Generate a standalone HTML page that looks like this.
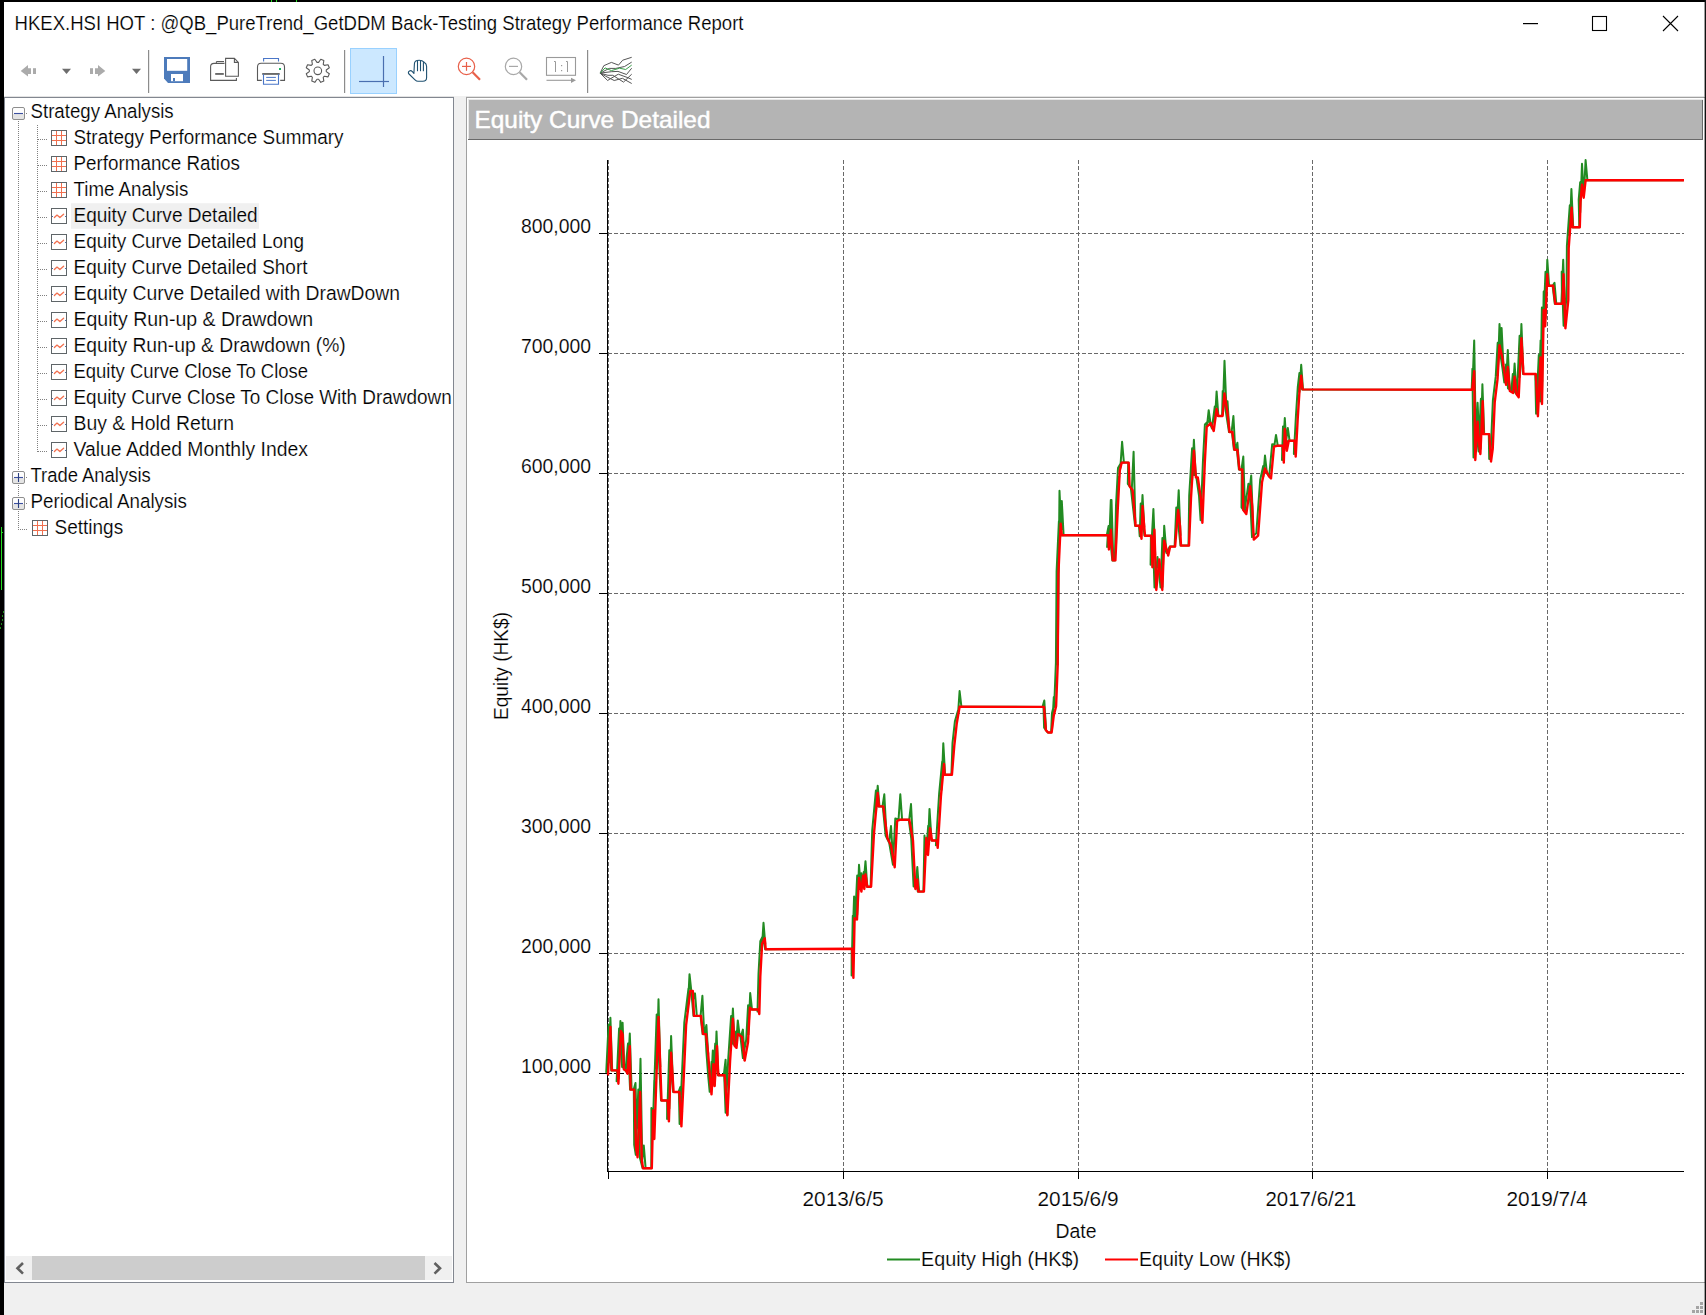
<!DOCTYPE html>
<html><head><meta charset="utf-8">
<style>
html,body{margin:0;padding:0;width:1706px;height:1315px;overflow:hidden;background:#fff;}
svg{position:absolute;left:0;top:0;}
text{font-family:"Liberation Sans", sans-serif;}
</style></head>
<body>
<svg width="1706" height="1315" viewBox="0 0 1706 1315">
<rect x="0" y="0" width="1706" height="1315" fill="#fff"/>
<!-- toolbar bottom line -->
<rect x="4" y="96" width="1700" height="1" fill="#e3e3e3"/>
<!-- status bar -->
<rect x="4" y="1283" width="1700" height="32" fill="#f0f0f0"/>
<!-- splitter -->
<rect x="454" y="96" width="12" height="1187" fill="#f0f0f0"/>
<!-- left panel -->
<rect x="4.5" y="97.5" width="449" height="1185" fill="#fff" stroke="#828790" stroke-width="1"/>
<!-- scrollbar -->
<rect x="6" y="1256" width="446" height="24" fill="#f0f0f0"/>
<rect x="32" y="1256" width="393" height="24" fill="#cdcdcd"/>
<path d="M23,1263 L17.5,1268.3 L23,1273.6" fill="none" stroke="#606060" stroke-width="2.6"/>
<path d="M434.5,1263 L440,1268.3 L434.5,1273.6" fill="none" stroke="#606060" stroke-width="2.6"/>
<!-- chart panel -->
<rect x="466.5" y="97.5" width="1240" height="1185" fill="#fff" stroke="#a0a0a0" stroke-width="1"/>
<rect x="468" y="99" width="1235" height="1" fill="#e8e8e8"/><rect x="468" y="99" width="1" height="41" fill="#e8e8e8"/><rect x="469" y="100" width="1234" height="40" fill="#b4b4b4"/>
<rect x="468" y="139" width="1235" height="1" fill="#696969"/>
<rect x="1702" y="100" width="1" height="40" fill="#696969"/>
<line x1="37.5" y1="125" x2="37.5" y2="452" stroke="#808080" stroke-width="1" stroke-dasharray="1,1"/><line x1="18.5" y1="121" x2="18.5" y2="530" stroke="#808080" stroke-width="1" stroke-dasharray="1,1"/><rect x="12.5" y="107.5" width="12" height="6.5" fill="#fdfdfd"/><rect x="12.5" y="114.0" width="12" height="5.5" fill="#e4e4e4"/><rect x="12.5" y="107.5" width="12" height="12" rx="1.5" fill="none" stroke="#8e8e8e" stroke-width="1"/><line x1="14" y1="113.5" x2="23" y2="113.5" stroke="#3c50a0" stroke-width="1.1"/><rect x="26" y="113" width="1" height="1" fill="#808080"/><rect x="51.5" y="130.5" width="15" height="15" fill="#fff" stroke="#5f6568" stroke-width="1"/><line x1="52" y1="135.5" x2="66" y2="135.5" stroke="#f07050" stroke-width="1"/><line x1="56.5" y1="131.0" x2="56.5" y2="145.0" stroke="#f07050" stroke-width="1"/><line x1="52" y1="140.5" x2="66" y2="140.5" stroke="#f07050" stroke-width="1"/><line x1="61.5" y1="131.0" x2="61.5" y2="145.0" stroke="#f07050" stroke-width="1"/><line x1="38" y1="139.5" x2="47" y2="139.5" stroke="#808080" stroke-width="1" stroke-dasharray="1,1"/><rect x="51.5" y="156.5" width="15" height="15" fill="#fff" stroke="#5f6568" stroke-width="1"/><line x1="52" y1="161.5" x2="66" y2="161.5" stroke="#f07050" stroke-width="1"/><line x1="56.5" y1="157.0" x2="56.5" y2="171.0" stroke="#f07050" stroke-width="1"/><line x1="52" y1="166.5" x2="66" y2="166.5" stroke="#f07050" stroke-width="1"/><line x1="61.5" y1="157.0" x2="61.5" y2="171.0" stroke="#f07050" stroke-width="1"/><line x1="38" y1="165.5" x2="47" y2="165.5" stroke="#808080" stroke-width="1" stroke-dasharray="1,1"/><rect x="51.5" y="182.5" width="15" height="15" fill="#fff" stroke="#5f6568" stroke-width="1"/><line x1="52" y1="187.5" x2="66" y2="187.5" stroke="#f07050" stroke-width="1"/><line x1="56.5" y1="183.0" x2="56.5" y2="197.0" stroke="#f07050" stroke-width="1"/><line x1="52" y1="192.5" x2="66" y2="192.5" stroke="#f07050" stroke-width="1"/><line x1="61.5" y1="183.0" x2="61.5" y2="197.0" stroke="#f07050" stroke-width="1"/><line x1="38" y1="191.5" x2="47" y2="191.5" stroke="#808080" stroke-width="1" stroke-dasharray="1,1"/><rect x="71" y="203.2" width="188" height="25.6" fill="#f0f0f0"/><rect x="51.5" y="208.5" width="15" height="15" fill="#fff" stroke="#5f6568" stroke-width="1"/><polyline points="54.4,217.5 57,215.1 59.9,217.6 63.6,214.2" fill="none" stroke="#f07050" stroke-width="1.3" stroke-linejoin="round" stroke-linecap="round"/><rect x="52" y="216.0" width="1" height="1" fill="#4a6aa8"/><rect x="65" y="216.0" width="1" height="1" fill="#4a6aa8"/><line x1="38" y1="217.5" x2="47" y2="217.5" stroke="#808080" stroke-width="1" stroke-dasharray="1,1"/><rect x="51.5" y="234.5" width="15" height="15" fill="#fff" stroke="#5f6568" stroke-width="1"/><polyline points="54.4,243.5 57,241.1 59.9,243.6 63.6,240.2" fill="none" stroke="#f07050" stroke-width="1.3" stroke-linejoin="round" stroke-linecap="round"/><rect x="52" y="242.0" width="1" height="1" fill="#4a6aa8"/><rect x="65" y="242.0" width="1" height="1" fill="#4a6aa8"/><line x1="38" y1="243.5" x2="47" y2="243.5" stroke="#808080" stroke-width="1" stroke-dasharray="1,1"/><rect x="51.5" y="260.5" width="15" height="15" fill="#fff" stroke="#5f6568" stroke-width="1"/><polyline points="54.4,269.5 57,267.1 59.9,269.6 63.6,266.2" fill="none" stroke="#f07050" stroke-width="1.3" stroke-linejoin="round" stroke-linecap="round"/><rect x="52" y="268.0" width="1" height="1" fill="#4a6aa8"/><rect x="65" y="268.0" width="1" height="1" fill="#4a6aa8"/><line x1="38" y1="269.5" x2="47" y2="269.5" stroke="#808080" stroke-width="1" stroke-dasharray="1,1"/><rect x="51.5" y="286.5" width="15" height="15" fill="#fff" stroke="#5f6568" stroke-width="1"/><polyline points="54.4,295.5 57,293.1 59.9,295.6 63.6,292.2" fill="none" stroke="#f07050" stroke-width="1.3" stroke-linejoin="round" stroke-linecap="round"/><rect x="52" y="294.0" width="1" height="1" fill="#4a6aa8"/><rect x="65" y="294.0" width="1" height="1" fill="#4a6aa8"/><line x1="38" y1="295.5" x2="47" y2="295.5" stroke="#808080" stroke-width="1" stroke-dasharray="1,1"/><rect x="51.5" y="312.5" width="15" height="15" fill="#fff" stroke="#5f6568" stroke-width="1"/><polyline points="54.4,321.5 57,319.1 59.9,321.6 63.6,318.2" fill="none" stroke="#f07050" stroke-width="1.3" stroke-linejoin="round" stroke-linecap="round"/><rect x="52" y="320.0" width="1" height="1" fill="#4a6aa8"/><rect x="65" y="320.0" width="1" height="1" fill="#4a6aa8"/><line x1="38" y1="321.5" x2="47" y2="321.5" stroke="#808080" stroke-width="1" stroke-dasharray="1,1"/><rect x="51.5" y="338.5" width="15" height="15" fill="#fff" stroke="#5f6568" stroke-width="1"/><polyline points="54.4,347.5 57,345.1 59.9,347.6 63.6,344.2" fill="none" stroke="#f07050" stroke-width="1.3" stroke-linejoin="round" stroke-linecap="round"/><rect x="52" y="346.0" width="1" height="1" fill="#4a6aa8"/><rect x="65" y="346.0" width="1" height="1" fill="#4a6aa8"/><line x1="38" y1="347.5" x2="47" y2="347.5" stroke="#808080" stroke-width="1" stroke-dasharray="1,1"/><rect x="51.5" y="364.5" width="15" height="15" fill="#fff" stroke="#5f6568" stroke-width="1"/><polyline points="54.4,373.5 57,371.1 59.9,373.6 63.6,370.2" fill="none" stroke="#f07050" stroke-width="1.3" stroke-linejoin="round" stroke-linecap="round"/><rect x="52" y="372.0" width="1" height="1" fill="#4a6aa8"/><rect x="65" y="372.0" width="1" height="1" fill="#4a6aa8"/><line x1="38" y1="373.5" x2="47" y2="373.5" stroke="#808080" stroke-width="1" stroke-dasharray="1,1"/><rect x="51.5" y="390.5" width="15" height="15" fill="#fff" stroke="#5f6568" stroke-width="1"/><polyline points="54.4,399.5 57,397.1 59.9,399.6 63.6,396.2" fill="none" stroke="#f07050" stroke-width="1.3" stroke-linejoin="round" stroke-linecap="round"/><rect x="52" y="398.0" width="1" height="1" fill="#4a6aa8"/><rect x="65" y="398.0" width="1" height="1" fill="#4a6aa8"/><line x1="38" y1="399.5" x2="47" y2="399.5" stroke="#808080" stroke-width="1" stroke-dasharray="1,1"/><rect x="51.5" y="416.5" width="15" height="15" fill="#fff" stroke="#5f6568" stroke-width="1"/><polyline points="54.4,425.5 57,423.1 59.9,425.6 63.6,422.2" fill="none" stroke="#f07050" stroke-width="1.3" stroke-linejoin="round" stroke-linecap="round"/><rect x="52" y="424.0" width="1" height="1" fill="#4a6aa8"/><rect x="65" y="424.0" width="1" height="1" fill="#4a6aa8"/><line x1="38" y1="425.5" x2="47" y2="425.5" stroke="#808080" stroke-width="1" stroke-dasharray="1,1"/><rect x="51.5" y="442.5" width="15" height="15" fill="#fff" stroke="#5f6568" stroke-width="1"/><polyline points="54.4,451.5 57,449.1 59.9,451.6 63.6,448.2" fill="none" stroke="#f07050" stroke-width="1.3" stroke-linejoin="round" stroke-linecap="round"/><rect x="52" y="450.0" width="1" height="1" fill="#4a6aa8"/><rect x="65" y="450.0" width="1" height="1" fill="#4a6aa8"/><line x1="38" y1="451.5" x2="47" y2="451.5" stroke="#808080" stroke-width="1" stroke-dasharray="1,1"/><rect x="12.5" y="471.5" width="12" height="6.5" fill="#fdfdfd"/><rect x="12.5" y="478.0" width="12" height="5.5" fill="#e4e4e4"/><rect x="12.5" y="471.5" width="12" height="12" rx="1.5" fill="none" stroke="#8e8e8e" stroke-width="1"/><line x1="14" y1="477.5" x2="23" y2="477.5" stroke="#3c50a0" stroke-width="1.1"/><line x1="18.5" y1="473.0" x2="18.5" y2="482.0" stroke="#2c4080" stroke-width="1.1"/><rect x="26" y="477" width="1" height="1" fill="#808080"/><rect x="12.5" y="497.5" width="12" height="6.5" fill="#fdfdfd"/><rect x="12.5" y="504.0" width="12" height="5.5" fill="#e4e4e4"/><rect x="12.5" y="497.5" width="12" height="12" rx="1.5" fill="none" stroke="#8e8e8e" stroke-width="1"/><line x1="14" y1="503.5" x2="23" y2="503.5" stroke="#3c50a0" stroke-width="1.1"/><line x1="18.5" y1="499.0" x2="18.5" y2="508.0" stroke="#2c4080" stroke-width="1.1"/><rect x="26" y="503" width="1" height="1" fill="#808080"/><rect x="32.5" y="520.5" width="15" height="15" fill="#fff" stroke="#5f6568" stroke-width="1"/><line x1="33" y1="525.5" x2="47" y2="525.5" stroke="#f07050" stroke-width="1"/><line x1="37.5" y1="521.0" x2="37.5" y2="535.0" stroke="#f07050" stroke-width="1"/><line x1="33" y1="530.5" x2="47" y2="530.5" stroke="#f07050" stroke-width="1"/><line x1="42.5" y1="521.0" x2="42.5" y2="535.0" stroke="#f07050" stroke-width="1"/><line x1="18" y1="529.5" x2="27" y2="529.5" stroke="#808080" stroke-width="1" stroke-dasharray="1,1"/>
<line x1="608" y1="233.5" x2="1684" y2="233.5" stroke="#696969" stroke-width="1" stroke-dasharray="4,2"/><line x1="608" y1="353.5" x2="1684" y2="353.5" stroke="#696969" stroke-width="1" stroke-dasharray="4,2"/><line x1="608" y1="473.5" x2="1684" y2="473.5" stroke="#696969" stroke-width="1" stroke-dasharray="4,2"/><line x1="608" y1="593.5" x2="1684" y2="593.5" stroke="#696969" stroke-width="1" stroke-dasharray="4,2"/><line x1="608" y1="713.5" x2="1684" y2="713.5" stroke="#696969" stroke-width="1" stroke-dasharray="4,2"/><line x1="608" y1="833.5" x2="1684" y2="833.5" stroke="#696969" stroke-width="1" stroke-dasharray="4,2"/><line x1="608" y1="953.5" x2="1684" y2="953.5" stroke="#696969" stroke-width="1" stroke-dasharray="4,2"/><line x1="608.5" y1="160" x2="608.5" y2="1171" stroke="#696969" stroke-width="1" stroke-dasharray="4,2"/><line x1="843.5" y1="160" x2="843.5" y2="1171" stroke="#696969" stroke-width="1" stroke-dasharray="4,2"/><line x1="1078.5" y1="160" x2="1078.5" y2="1171" stroke="#696969" stroke-width="1" stroke-dasharray="4,2"/><line x1="1312.5" y1="160" x2="1312.5" y2="1171" stroke="#696969" stroke-width="1" stroke-dasharray="4,2"/><line x1="1547.5" y1="160" x2="1547.5" y2="1171" stroke="#696969" stroke-width="1" stroke-dasharray="4,2"/><line x1="608" y1="1073.5" x2="1684" y2="1073.5" stroke="#000" stroke-width="1" stroke-dasharray="4,2"/><line x1="607.5" y1="160" x2="607.5" y2="1171.5" stroke="#000" stroke-width="1"/><line x1="607" y1="1171.5" x2="1684" y2="1171.5" stroke="#000" stroke-width="1"/><line x1="599" y1="233.5" x2="608" y2="233.5" stroke="#000" stroke-width="1"/><line x1="599" y1="353.5" x2="608" y2="353.5" stroke="#000" stroke-width="1"/><line x1="599" y1="473.5" x2="608" y2="473.5" stroke="#000" stroke-width="1"/><line x1="599" y1="593.5" x2="608" y2="593.5" stroke="#000" stroke-width="1"/><line x1="599" y1="713.5" x2="608" y2="713.5" stroke="#000" stroke-width="1"/><line x1="599" y1="833.5" x2="608" y2="833.5" stroke="#000" stroke-width="1"/><line x1="599" y1="953.5" x2="608" y2="953.5" stroke="#000" stroke-width="1"/><line x1="599" y1="1073.5" x2="608" y2="1073.5" stroke="#000" stroke-width="1"/><line x1="608.5" y1="1171" x2="608.5" y2="1179" stroke="#000" stroke-width="1"/><line x1="843.5" y1="1171" x2="843.5" y2="1179" stroke="#000" stroke-width="1"/><line x1="1078.5" y1="1171" x2="1078.5" y2="1179" stroke="#000" stroke-width="1"/><line x1="1312.5" y1="1171" x2="1312.5" y2="1179" stroke="#000" stroke-width="1"/><line x1="1547.5" y1="1171" x2="1547.5" y2="1179" stroke="#000" stroke-width="1"/><path d="M606.2,1072.9 L608.6,1024.4 L611.2,1070.4 L617.1,1070.4 L616.6,1081.2 L619.1,1028.5 L620.8,1031.9 L622.1,1067.0 L624.1,1067.9 L625.8,1071.2 L626.6,1057.8 L628.0,1043.6 L630.1,1089.6 L633.8,1089.6 L634.2,1144.8 L635.8,1154.8 L638.3,1089.5 L640.0,1158.2 L642.6,1168.2 L651.3,1168.2 L651.4,1108.0 L652.5,1136.5 L656.7,1014.4 L661.0,1100.5 L667.2,1100.5 L667.1,1118.9 L669.3,1050.3 L673.1,1092.0 L678.9,1092.0 L679.6,1123.9 L681.8,1077.9 L684.3,1022.7 L688.5,988.4 L691.0,988.4 L693.5,1015.9 L700.5,1015.9 L702.6,1034.1 L705.5,1034.1 L706.4,1051.7 L708.3,1077.2 L709.7,1091.8 L711.6,1061.7 L712.8,1083.6 L715.2,1043.5 L717.8,1075.2 L724.2,1075.2 L725.6,1112.8 L728.3,1058.1 L731.1,1016.1 L732.9,1043.5 L734.7,1045.3 L736.0,1031.6 L740.2,1034.4 L742.9,1058.1 L746.2,1039.8 L748.1,1005.2 L751.5,1009.5 L757.9,1009.5 L757.5,1011.5 L758.5,974.1 L760.3,941.3 L763.0,935.8 L765.2,949.3 L851.7,948.7 L851.6,975.4 L852.8,915.8 L855.2,917.0 L857.2,875.5 L859.6,889.1 L861.3,873.2 L862.5,886.5 L863.7,872.0 L866.7,886.7 L870.6,886.7 L872.2,830.7 L875.9,790.5 L878.4,806.4 L882.8,806.4 L885.6,835.5 L889.2,842.9 L892.9,864.7 L895.3,818.5 L899.1,819.8 L908.8,819.8 L911.2,838.0 L913.6,886.5 L915.5,876.9 L917.8,891.6 L923.4,891.6 L924.5,835.5 L926.2,852.5 L928.2,825.8 L931.5,840.5 L936.3,840.5 L935.9,845.3 L939.1,794.2 L942.2,761.5 L944.1,774.8 L951.4,774.8 L952.5,743.2 L954.9,721.3 L959.1,706.7 L1043.5,706.9 L1044.1,727.7 L1047.6,732.5 L1051.1,732.5 L1052.0,712.9 L1054.3,703.7 L1055.9,662.7 L1056.6,571.5 L1058.9,521.3 L1061.3,535.2 L1107.8,535.3 L1107.1,547.0 L1109.1,527.3 L1112.3,560.4 L1114.9,560.4 L1116.0,505.5 L1118.0,468.0 L1121.2,462.6 L1128.2,462.6 L1127.8,483.8 L1130.8,487.7 L1135.1,525.8 L1139.0,525.8 L1139.7,536.2 L1140.7,503.5 L1144.5,535.7 L1150.9,535.7 L1150.6,564.8 L1152.6,527.3 L1154.5,587.5 L1157.5,556.9 L1160.5,587.5 L1162.4,538.1 L1166.4,553.0 L1169.7,546.6 L1174.6,546.6 L1176.3,507.5 L1178.2,523.3 L1180.5,545.6 L1188.5,545.6 L1189.2,495.5 L1192.1,448.2 L1194.1,474.9 L1196.0,474.9 L1199.0,495.5 L1200.6,520.3 L1203.0,460.1 L1204.9,424.5 L1208.9,420.5 L1211.9,428.5 L1214.8,406.5 L1217.7,416.0 L1222.1,416.0 L1222.7,390.9 L1225.7,410.5 L1229.0,432.0 L1231.9,432.0 L1233.9,449.7 L1236.9,449.7 L1238.9,469.5 L1241.8,469.5 L1241.5,507.5 L1244.5,511.5 L1248.4,483.8 L1250.4,503.5 L1252.0,537.1 L1256.3,533.2 L1260.2,479.8 L1263.2,466.0 L1267.2,473.9 L1269.2,475.9 L1272.2,444.2 L1276.4,445.8 L1282.3,445.8 L1282.0,460.1 L1283.0,426.5 L1285.0,448.2 L1288.3,440.8 L1294.2,440.8 L1293.9,454.1 L1295.9,416.5 L1297.8,386.9 L1299.4,373.1 L1302.1,389.4 L1471.7,389.7 L1472.4,368.7 L1473.5,457.5 L1475.8,419.3 L1477.2,439.8 L1478.6,451.5 L1480.9,398.8 L1483.0,434.1 L1488.8,434.1 L1489.2,459.0 L1490.9,446.7 L1492.9,400.2 L1495.7,376.9 L1497.7,342.7 L1500.5,355.0 L1502.5,368.7 L1504.3,382.4 L1506.0,364.5 L1508.0,388.5 L1511.4,390.5 L1512.8,374.1 L1514.8,391.9 L1516.9,394.7 L1519.6,335.8 L1523.0,374.0 L1535.3,374.0 L1536.1,413.8 L1538.8,355.0 L1540.2,401.5 L1541.9,307.5 L1543.4,323.7 L1545.5,271.7 L1547.5,285.7 L1552.6,285.7 L1554.8,303.8 L1562.0,303.8 L1561.7,271.7 L1563.6,325.8 L1566.5,297.7 L1566.9,245.7 L1569.8,205.3 L1572.1,227.3 L1579.3,227.3 L1578.7,199.5 L1580.2,182.2 L1581.9,195.2 L1585.1,180.3 L1683.5,180.3 M608.6,1063.3 L610.4,1017.7 L612.2,1070.4 M618.6,1079.5 L620.4,1021.0 L622.2,1033.6 M620.8,1033.1 L622.6,1022.7 L624.4,1069.7 M628.0,1067.0 L629.8,1033.6 L631.6,1089.6 M633.7,1089.6 L635.5,1082.9 L637.3,1155.4 M638.7,1128.6 L640.5,1058.7 L642.3,1163.6 M642.0,1161.9 L643.8,1145.6 L645.6,1168.2 M652.5,1139.3 L654.3,1080.4 L656.1,1086.7 M656.7,1069.2 L658.5,999.3 L660.3,1067.1 M669.3,1108.9 L671.1,1036.1 L672.9,1081.0 M678.5,1092.0 L680.3,1087.0 L682.1,1111.8 M687.7,1012.1 L689.5,974.2 L691.3,990.9 M693.2,999.2 L695.0,993.4 L696.8,1015.9 M700.6,1015.9 L702.4,995.8 L704.2,1034.1 M704.6,1034.1 L706.4,1025.0 L708.2,1054.2 M711.0,1089.1 L712.8,1050.5 L714.6,1086.1 M714.7,1084.4 L716.5,1031.4 L718.3,1075.2 M723.8,1075.2 L725.6,1059.7 L727.4,1115.3 M731.1,1045.6 L732.9,1008.6 L734.7,1046.0 M736.0,1047.3 L737.8,1020.4 L739.6,1035.3 M741.1,1036.3 L742.9,1029.6 L744.7,1060.6 M748.4,1035.0 L750.2,993.0 L752.0,1009.5 M761.7,951.1 L763.5,922.8 L765.3,944.4 M852.3,951.1 L854.1,896.4 L855.9,918.9 M857.2,915.3 L859.0,864.8 L860.8,888.2 M863.7,882.4 L865.5,861.2 L867.3,886.7 M875.9,812.6 L877.7,785.8 L879.5,806.4 M882.5,806.4 L884.3,794.3 L886.1,828.0 M889.2,841.7 L891.0,826.0 L892.8,856.0 M898.5,820.3 L900.3,794.3 L902.1,819.8 M909.2,819.8 L911.0,804.0 L912.8,839.4 M915.5,888.5 L917.3,867.0 L919.1,891.6 M927.7,852.0 L929.5,808.9 L931.3,836.2 M941.5,790.4 L943.3,743.2 L945.1,774.8 M957.8,717.3 L959.6,691.0 L961.4,706.7 M1042.5,706.9 L1044.3,700.5 L1046.1,730.4 M1052.0,729.4 L1053.8,697.0 L1055.6,708.2 M1057.7,665.2 L1059.5,490.8 L1061.3,530.0 M1060.0,539.1 L1061.8,501.0 L1063.6,535.2 M1106.8,535.3 L1108.6,526.0 L1110.4,534.7 M1109.0,548.5 L1110.8,500.0 L1112.6,557.2 M1115.9,549.5 L1117.7,480.5 L1119.5,476.1 M1109.7,541.6 L1111.5,500.0 L1113.3,560.4 M1120.3,468.4 L1122.1,441.8 L1123.9,462.6 M1131.8,489.2 L1133.6,451.7 L1135.4,523.4 M1140.7,533.5 L1142.5,495.0 L1144.3,527.4 M1151.6,542.0 L1153.4,509.0 L1155.2,555.1 M1162.4,587.4 L1164.2,525.8 L1166.0,547.3 M1176.9,524.6 L1178.7,490.2 L1180.5,535.7 M1192.1,480.1 L1193.9,439.8 L1195.7,474.7 M1206.9,426.8 L1208.7,410.2 L1210.5,423.2 M1214.8,422.7 L1216.6,391.4 L1218.4,416.0 M1222.7,414.8 L1224.5,360.8 L1226.3,405.2 M1225.7,401.2 L1227.5,401.3 L1229.3,430.1 M1231.6,432.0 L1233.4,416.0 L1235.2,449.7 M1235.6,449.7 L1237.4,442.8 L1239.2,467.5 M1241.5,469.5 L1243.3,456.6 L1245.1,512.4 M1249.4,492.0 L1251.2,475.4 L1253.0,522.8 M1263.2,476.8 L1265.0,455.6 L1266.8,472.1 M1274.2,446.6 L1276.0,434.9 L1277.8,445.8 M1283.0,449.2 L1284.8,418.0 L1286.6,448.5 M1286.0,442.0 L1287.8,428.0 L1289.6,440.8 M1299.4,392.5 L1301.2,364.7 L1303.0,389.4 M1472.4,387.8 L1474.2,340.4 L1476.0,448.4 M1475.8,451.7 L1477.6,402.7 L1479.4,445.6 M1480.6,449.4 L1482.4,384.2 L1484.2,434.1 M1497.7,376.0 L1499.5,324.0 L1501.3,353.1 M1499.8,346.5 L1501.6,328.0 L1503.4,365.0 M1506.0,384.1 L1507.8,350.0 L1509.6,388.6 M1512.8,392.8 L1514.6,363.6 L1516.4,392.6 M1519.6,377.6 L1521.4,324.0 L1523.2,368.9 M1538.8,396.7 L1540.6,340.4 L1542.4,381.9 M1541.9,400.7 L1543.7,291.5 L1545.5,318.8 M1545.5,318.8 L1547.3,259.7 L1549.1,285.7 M1552.7,285.7 L1554.5,282.9 L1556.3,303.8 M1561.4,303.8 L1563.2,259.7 L1565.0,316.9 M1569.6,235.7 L1571.4,189.0 L1573.2,227.3 M1580.2,212.8 L1582.0,163.7 L1583.8,196.8 M1583.8,196.8 L1585.6,160.1 L1587.4,180.3" fill="none" stroke="#228b22" stroke-width="2.0" stroke-linejoin="round"/><polyline points="608.0,1075.4 610.4,1026.9 611.7,1070.4 617.6,1070.4 618.4,1083.7 620.9,1031.0 622.6,1034.4 623.9,1069.5 625.9,1070.4 627.6,1073.7 628.4,1060.3 629.8,1046.1 630.6,1089.6 634.3,1089.6 636.0,1147.3 637.6,1157.3 640.1,1092.0 641.8,1160.7 643.1,1168.2 651.8,1168.2 653.2,1110.5 654.3,1139.0 658.5,1016.9 661.5,1100.5 667.7,1100.5 668.9,1121.4 671.1,1052.8 673.6,1092.0 679.4,1092.0 681.4,1126.4 683.6,1080.4 686.1,1025.2 690.3,990.9 692.8,990.9 694.0,1015.9 701.0,1015.9 703.1,1034.1 706.0,1034.1 708.2,1054.2 710.1,1079.7 711.5,1094.3 713.4,1064.2 714.6,1086.1 717.0,1046.0 718.3,1075.2 724.7,1075.2 727.4,1115.3 730.1,1060.6 732.9,1018.6 734.7,1046.0 736.5,1047.8 737.8,1034.1 742.0,1036.9 744.7,1060.6 748.0,1042.3 749.9,1007.7 752.0,1009.5 758.4,1009.5 759.3,1014.0 760.3,976.6 762.1,943.8 764.8,938.3 765.7,949.3 852.2,948.7 853.4,977.9 854.6,918.3 857.0,919.5 859.0,878.0 861.4,891.6 863.1,875.7 864.3,889.0 865.5,874.5 867.2,886.7 871.1,886.7 874.0,833.2 877.7,793.0 878.9,806.4 883.3,806.4 887.4,838.0 891.0,845.4 894.7,867.2 897.1,821.0 899.6,819.8 909.3,819.8 913.0,840.5 915.4,889.0 917.3,879.4 918.3,891.6 923.9,891.6 926.3,838.0 928.0,855.0 930.0,828.3 932.0,840.5 936.8,840.5 937.7,847.8 940.9,796.7 944.0,764.0 944.6,774.8 951.9,774.8 954.3,745.7 956.7,723.8 959.6,706.7 1044.0,706.9 1045.9,730.2 1048.1,732.5 1051.6,732.5 1053.8,715.4 1056.1,706.2 1057.7,665.2 1058.4,574.0 1060.7,523.8 1061.8,535.2 1108.3,535.3 1108.9,549.5 1110.9,529.8 1112.8,560.4 1115.4,560.4 1117.8,508.0 1119.8,470.5 1121.7,462.6 1128.7,462.6 1129.6,486.3 1132.6,490.2 1135.6,525.8 1139.5,525.8 1141.5,538.7 1142.5,506.0 1145.0,535.7 1151.4,535.7 1152.4,567.3 1154.4,529.8 1156.3,590.0 1159.3,559.4 1162.3,590.0 1164.2,540.6 1168.2,555.5 1170.2,546.6 1175.1,546.6 1178.1,510.0 1180.0,525.8 1181.0,545.6 1189.0,545.6 1191.0,498.0 1193.9,450.7 1195.9,477.4 1197.8,477.4 1200.8,498.0 1202.4,522.8 1204.8,462.6 1206.7,427.0 1210.7,423.0 1213.7,431.0 1216.6,409.0 1218.2,416.0 1222.6,416.0 1224.5,393.4 1227.5,413.0 1229.5,432.0 1232.4,432.0 1234.4,449.7 1237.4,449.7 1239.4,469.5 1242.3,469.5 1243.3,510.0 1246.3,514.0 1250.2,486.3 1252.2,506.0 1253.8,539.6 1258.1,535.7 1262.0,482.3 1265.0,468.5 1269.0,476.4 1271.0,478.4 1274.0,446.7 1276.9,445.8 1282.8,445.8 1283.8,462.6 1284.8,429.0 1286.8,450.7 1288.8,440.8 1294.7,440.8 1295.7,456.6 1297.7,419.0 1299.6,389.4 1301.2,375.6 1302.6,389.4 1472.2,389.7 1474.2,371.2 1475.3,460.0 1477.6,421.8 1479.0,442.3 1480.4,454.0 1482.7,401.3 1483.5,434.1 1489.3,434.1 1491.0,461.5 1492.7,449.2 1494.7,402.7 1497.5,379.4 1499.5,345.2 1502.3,357.5 1504.3,371.2 1506.1,384.9 1507.8,367.0 1509.8,391.0 1513.2,393.0 1514.6,376.6 1516.6,394.4 1518.7,397.2 1521.4,338.3 1523.5,374.0 1535.8,374.0 1537.9,416.3 1540.6,357.5 1542.0,404.0 1543.7,310.0 1545.2,326.2 1547.3,274.2 1548.0,285.7 1553.1,285.7 1555.3,303.8 1562.5,303.8 1563.5,274.2 1565.4,328.3 1568.3,300.2 1568.7,248.2 1571.6,207.8 1572.6,227.3 1579.8,227.3 1580.5,202.0 1582.0,184.7 1583.7,197.7 1585.6,180.3 1684.0,180.3" fill="none" stroke="#ff0000" stroke-width="2.4" stroke-linejoin="round"/>
<path d="M20.7,70.9 L28,65.1 L28,68.2 L31,68.2 L31,74 L28,74 L28,76.6 Z" fill="#ababab"/><rect x="33" y="68.2" width="3" height="5.8" fill="#ababab"/><path d="M62,68.8 L71,68.8 L66.5,74 Z" fill="#6d6d6d"/><rect x="90" y="68.2" width="3" height="5.8" fill="#ababab"/><path d="M105.3,70.9 L98,65.1 L98,68.2 L95,68.2 L95,74 L98,74 L98,76.6 Z" fill="#ababab"/><path d="M132,68.8 L141,68.8 L136.5,74 Z" fill="#6d6d6d"/><rect x="148" y="50" width="1.2" height="43" fill="#8c8c8c"/><path d="M164,57 L190,57 L190,83 L168,83 L164,78.6 Z" fill="#4d7bbb"/><rect x="167" y="59" width="20.2" height="11.8" fill="#fff"/><rect x="171" y="74" width="12" height="7.2" fill="#fff"/><rect x="173" y="78" width="2" height="3.2" fill="#4d7bbb"/><path d="M224.5,63.4 L214,63.4 Q210.6,63.4 210.6,66.8 L210.6,80.4 L236.4,80.4 L236.4,78" fill="none" stroke="#5a5a5a" stroke-width="1.1"/><path d="M216.4,63.4 L216.4,61.5 L224,61.5" fill="none" stroke="#5a5a5a" stroke-width="1"/><rect x="215.2" y="73.1" width="8.6" height="1.7" fill="#5a5a5a"/><path d="M225.6,58.4 L234.4,58.4 L238.4,62.4 L238.4,76.3 L225.6,76.3 Z M234.4,58.6 L234.4,62.4 L238.2,62.4" fill="none" stroke="#5a5a5a" stroke-width="1.1" stroke-linejoin="miter"/><path d="M263.6,61.6 L263.6,58.5 L278.5,58.5 L278.5,61.6" fill="none" stroke="#4a76c8" stroke-width="1.1"/><path d="M261.8,80.4 L257.5,80.4 L257.5,67 Q257.5,63.3 261.2,63.3 L280.8,63.3 Q284.5,63.3 284.5,67 L284.5,80.4 L280.2,80.4" fill="none" stroke="#5a5a5a" stroke-width="1.1"/><rect x="262.2" y="73.1" width="17.5" height="1.7" fill="#5a5a5a"/><path d="M263.5,74.3 L263.5,84.2 L278.5,84.2 L278.5,74.3" fill="none" stroke="#4a76c8" stroke-width="1.1"/><line x1="266.2" y1="77.4" x2="275.9" y2="77.4" stroke="#4a76c8" stroke-width="1"/><line x1="266.2" y1="80.4" x2="275.9" y2="80.4" stroke="#4a76c8" stroke-width="1"/><rect x="279" y="68" width="2" height="2" fill="#19b060"/><polygon points="326.26,71.59 329.32,73.78 328.05,76.84 324.34,76.23 323.23,77.34 323.84,81.05 320.78,82.32 318.59,79.26 317.01,79.26 314.82,82.32 311.76,81.05 312.37,77.34 311.26,76.23 307.55,76.84 306.28,73.78 309.34,71.59 309.34,70.01 306.28,67.82 307.55,64.76 311.26,65.37 312.37,64.26 311.76,60.55 314.82,59.28 317.01,62.34 318.59,62.34 320.78,59.28 323.84,60.55 323.23,64.26 324.34,65.37 328.05,64.76 329.32,67.82 326.26,70.01" fill="none" stroke="#5a5a5a" stroke-width="1.1" stroke-linejoin="round"/><circle cx="317.8" cy="70.8" r="3.8" fill="none" stroke="#5a5a5a" stroke-width="1.1"/><rect x="344" y="50" width="1.2" height="43" fill="#8c8c8c"/><rect x="350.5" y="48.5" width="46" height="45" fill="#cce8ff" stroke="#99d1ff" stroke-width="1"/><line x1="383.5" y1="56" x2="383.5" y2="87" stroke="#4a6fb0" stroke-width="1.2"/><line x1="359" y1="81.5" x2="389" y2="81.5" stroke="#4a6fb0" stroke-width="1.2"/><path d="M413.9,73.5 L414.4,64 C414.4,61.5 416.5,60.2 419.2,60.2 C421.5,60.2 423.3,61.3 424.4,62.4 C425.8,63.2 426.6,64.5 426.6,66.5 L426.6,77.5 C426.6,79.8 425,81.3 422.8,81.3 L418,81.3 C416.8,81.3 415.8,80.6 415,79.8 L409,74 C408,73 408.2,71.6 409.5,70.9 C410.6,70.3 411.6,70.8 412.4,71.6 Z M417.5,61.3 L417.5,70.8 M420.5,60.6 L420.5,70.8 M423.4,62.2 L423.4,70.8" fill="none" stroke="#1e5070" stroke-width="1.1" stroke-linejoin="round" stroke-linecap="round"/><circle cx="466.5" cy="66.4" r="8.2" fill="none" stroke="#e8604a" stroke-width="1.2"/><line x1="472.6" y1="72.3" x2="480" y2="79.8" stroke="#e8604a" stroke-width="2.2"/><line x1="462" y1="66.4" x2="471" y2="66.4" stroke="#e8604a" stroke-width="1.2"/><line x1="466.5" y1="62" x2="466.5" y2="70.8" stroke="#e8604a" stroke-width="1.2"/><circle cx="513.5" cy="66.4" r="8.2" fill="none" stroke="#a8a8a8" stroke-width="1.2"/><line x1="519.6" y1="72.3" x2="527" y2="79.8" stroke="#a8a8a8" stroke-width="2.2"/><line x1="509" y1="66.4" x2="518" y2="66.4" stroke="#a8a8a8" stroke-width="1.2"/><rect x="546.5" y="57.5" width="29" height="17.8" fill="none" stroke="#9a9a9a" stroke-width="1.1"/><path d="M554,61.5 L555.5,61.5 L555.5,72 M566,61.5 L567.5,61.5 L567.5,72" fill="none" stroke="#9a9a9a" stroke-width="1"/><rect x="561" y="65" width="1.2" height="1.2" fill="#9a9a9a"/><rect x="561" y="70" width="1.2" height="1.2" fill="#9a9a9a"/><line x1="546.5" y1="80.3" x2="572" y2="80.3" stroke="#9a9a9a" stroke-width="1.1"/><path d="M571,77.7 L576,80.3 L571,82.9 Z" fill="#9a9a9a"/><rect x="587" y="50" width="1.2" height="43" fill="#8c8c8c"/><polyline points="600.1,73.1 603.8,65.7 611.4,62.4 618.5,65.1 622.7,60.2 631.7,57.3" fill="none" stroke="#555" stroke-width="1" stroke-linejoin="round"/><polyline points="600.1,73.1 602.9,71.7 609.2,68.4 615.8,68.4 624.6,66.5 631.7,62.1" fill="none" stroke="#555" stroke-width="1" stroke-linejoin="round"/><polyline points="600.1,73.1 611.4,71.7 618,71.4 626.5,74.5 631.7,68.2" fill="none" stroke="#555" stroke-width="1" stroke-linejoin="round"/><polyline points="600.1,73.1 607.9,75.3 612.8,75.3 623.5,82.1 631.7,74.2" fill="none" stroke="#555" stroke-width="1" stroke-linejoin="round"/><polyline points="600.1,73.1 607.6,80.5 610.6,78.6 618.3,74.2 627.9,77.7 631.7,79.4" fill="none" stroke="#555" stroke-width="1" stroke-linejoin="round"/><polyline points="600.1,73.1 605.4,76.1 614.2,80.5 622.4,78.3 631.7,83.5" fill="none" stroke="#555" stroke-width="1" stroke-linejoin="round"/><polyline points="600.1,73.1 605.1,67.9 611.4,70.6 619.6,68.2 625.7,69.5 631.7,65.1" fill="none" stroke="#3aa04a" stroke-width="1" stroke-linejoin="round"/>
<rect x="1523" y="23" width="15" height="1.2" fill="#000"/><rect x="1592.5" y="16.5" width="14" height="14" fill="none" stroke="#000" stroke-width="1.1"/><path d="M1663,16 L1678,31 M1678,16 L1663,31" stroke="#000" stroke-width="1.1"/>
<text x="14.5" y="30" font-size="19.8" text-anchor="start" fill="#000" stroke="#fff" stroke-width="0.18" textLength="729" lengthAdjust="spacingAndGlyphs" >HKEX.HSI HOT : @QB_PureTrend_GetDDM Back-Testing Strategy Performance Report</text><text x="30.5" y="117.5" font-size="19.5" text-anchor="start" fill="#000" stroke="#fff" stroke-width="0.18" textLength="143.2" lengthAdjust="spacingAndGlyphs" >Strategy Analysis</text><text x="73.5" y="143.5" font-size="19.5" text-anchor="start" fill="#000" stroke="#fff" stroke-width="0.18" textLength="269.9" lengthAdjust="spacingAndGlyphs" >Strategy Performance Summary</text><text x="73.5" y="169.5" font-size="19.5" text-anchor="start" fill="#000" stroke="#fff" stroke-width="0.18" textLength="166.3" lengthAdjust="spacingAndGlyphs" >Performance Ratios</text><text x="73.5" y="195.5" font-size="19.5" text-anchor="start" fill="#000" stroke="#fff" stroke-width="0.18" textLength="114.8" lengthAdjust="spacingAndGlyphs" >Time Analysis</text><text x="73.5" y="221.5" font-size="19.5" text-anchor="start" fill="#000" stroke="#f0f0f0" stroke-width="0.18" textLength="184.1" lengthAdjust="spacingAndGlyphs" >Equity Curve Detailed</text><text x="73.5" y="247.5" font-size="19.5" text-anchor="start" fill="#000" stroke="#fff" stroke-width="0.18" textLength="230.5" lengthAdjust="spacingAndGlyphs" >Equity Curve Detailed Long</text><text x="73.5" y="273.5" font-size="19.5" text-anchor="start" fill="#000" stroke="#fff" stroke-width="0.18" textLength="234.0" lengthAdjust="spacingAndGlyphs" >Equity Curve Detailed Short</text><text x="73.5" y="299.5" font-size="19.5" text-anchor="start" fill="#000" stroke="#fff" stroke-width="0.18" textLength="326.5" lengthAdjust="spacingAndGlyphs" >Equity Curve Detailed with DrawDown</text><text x="73.5" y="325.5" font-size="19.5" text-anchor="start" fill="#000" stroke="#fff" stroke-width="0.18" textLength="239.6" lengthAdjust="spacingAndGlyphs" >Equity Run-up &amp; Drawdown</text><text x="73.5" y="351.5" font-size="19.5" text-anchor="start" fill="#000" stroke="#fff" stroke-width="0.18" textLength="272.2" lengthAdjust="spacingAndGlyphs" >Equity Run-up &amp; Drawdown (%)</text><text x="73.5" y="377.5" font-size="19.5" text-anchor="start" fill="#000" stroke="#fff" stroke-width="0.18" textLength="234.5" lengthAdjust="spacingAndGlyphs" >Equity Curve Close To Close</text><text x="73.5" y="403.5" font-size="19.5" text-anchor="start" fill="#000" stroke="#fff" stroke-width="0.18" textLength="378.2" lengthAdjust="spacingAndGlyphs" >Equity Curve Close To Close With Drawdown</text><text x="73.5" y="429.5" font-size="19.5" text-anchor="start" fill="#000" stroke="#fff" stroke-width="0.18" textLength="160.6" lengthAdjust="spacingAndGlyphs" >Buy &amp; Hold Return</text><text x="73.5" y="455.5" font-size="19.5" text-anchor="start" fill="#000" stroke="#fff" stroke-width="0.18" textLength="234.4" lengthAdjust="spacingAndGlyphs" >Value Added Monthly Index</text><text x="30.5" y="481.5" font-size="19.5" text-anchor="start" fill="#000" stroke="#fff" stroke-width="0.18" textLength="120.2" lengthAdjust="spacingAndGlyphs" >Trade Analysis</text><text x="30.5" y="507.5" font-size="19.5" text-anchor="start" fill="#000" stroke="#fff" stroke-width="0.18" textLength="156.4" lengthAdjust="spacingAndGlyphs" >Periodical Analysis</text><text x="54.5" y="533.5" font-size="19.5" text-anchor="start" fill="#000" stroke="#fff" stroke-width="0.18" textLength="68.7" lengthAdjust="spacingAndGlyphs" >Settings</text><text x="474.5" y="128" font-size="24.0" text-anchor="start" fill="#fff" textLength="236" lengthAdjust="spacingAndGlyphs" stroke="#fff" stroke-width="0.45">Equity Curve Detailed</text><text x="591" y="233" font-size="19.5" text-anchor="end" fill="#000" stroke="#fff" stroke-width="0.18" textLength="70" lengthAdjust="spacingAndGlyphs" >800,000</text><text x="591" y="353" font-size="19.5" text-anchor="end" fill="#000" stroke="#fff" stroke-width="0.18" textLength="70" lengthAdjust="spacingAndGlyphs" >700,000</text><text x="591" y="473" font-size="19.5" text-anchor="end" fill="#000" stroke="#fff" stroke-width="0.18" textLength="70" lengthAdjust="spacingAndGlyphs" >600,000</text><text x="591" y="593" font-size="19.5" text-anchor="end" fill="#000" stroke="#fff" stroke-width="0.18" textLength="70" lengthAdjust="spacingAndGlyphs" >500,000</text><text x="591" y="713" font-size="19.5" text-anchor="end" fill="#000" stroke="#fff" stroke-width="0.18" textLength="70" lengthAdjust="spacingAndGlyphs" >400,000</text><text x="591" y="833" font-size="19.5" text-anchor="end" fill="#000" stroke="#fff" stroke-width="0.18" textLength="70" lengthAdjust="spacingAndGlyphs" >300,000</text><text x="591" y="953" font-size="19.5" text-anchor="end" fill="#000" stroke="#fff" stroke-width="0.18" textLength="70" lengthAdjust="spacingAndGlyphs" >200,000</text><text x="591" y="1073" font-size="19.5" text-anchor="end" fill="#000" stroke="#fff" stroke-width="0.18" textLength="70" lengthAdjust="spacingAndGlyphs" >100,000</text><text x="843" y="1206" font-size="19.5" text-anchor="middle" fill="#000" stroke="#fff" stroke-width="0.18" textLength="81" lengthAdjust="spacingAndGlyphs" >2013/6/5</text><text x="1078" y="1206" font-size="19.5" text-anchor="middle" fill="#000" stroke="#fff" stroke-width="0.18" textLength="81" lengthAdjust="spacingAndGlyphs" >2015/6/9</text><text x="1311" y="1206" font-size="19.5" text-anchor="middle" fill="#000" stroke="#fff" stroke-width="0.18" textLength="91" lengthAdjust="spacingAndGlyphs" >2017/6/21</text><text x="1547" y="1206" font-size="19.5" text-anchor="middle" fill="#000" stroke="#fff" stroke-width="0.18" textLength="81" lengthAdjust="spacingAndGlyphs" >2019/7/4</text><text x="1076" y="1238" font-size="19.5" text-anchor="middle" fill="#000" stroke="#fff" stroke-width="0.18" textLength="41" lengthAdjust="spacingAndGlyphs" >Date</text><text x="921" y="1266" font-size="19.5" text-anchor="start" fill="#000" stroke="#fff" stroke-width="0.18" textLength="158" lengthAdjust="spacingAndGlyphs" >Equity High (HK$)</text><rect x="887" y="1258.5" width="33" height="2" fill="#228b22"/><rect x="1105" y="1258.5" width="33" height="2" fill="#ff0000"/><text x="1139" y="1266" font-size="19.5" text-anchor="start" fill="#000" stroke="#fff" stroke-width="0.18" textLength="152" lengthAdjust="spacingAndGlyphs" >Equity Low (HK$)</text><text x="0" y="0" font-size="19.5" stroke="#fff" stroke-width="0.18" transform="translate(508,720) rotate(-90)" textLength="108" lengthAdjust="spacingAndGlyphs">Equity (HK$)</text>
<!-- resize grip -->
<rect x="1700" y="1302" width="3" height="3" fill="#a4a4a4"/><rect x="1696" y="1306" width="3" height="3" fill="#a4a4a4"/><rect x="1700" y="1306" width="3" height="3" fill="#a4a4a4"/><rect x="1692" y="1310" width="3" height="3" fill="#a4a4a4"/><rect x="1696" y="1310" width="3" height="3" fill="#a4a4a4"/><rect x="1700" y="1310" width="3" height="3" fill="#a4a4a4"/>
<!-- window borders -->
<rect x="0" y="0" width="1706" height="2" fill="#000"/>
<rect x="0" y="0" width="4" height="1315" fill="#000"/>
<rect x="1704.6" y="0" width="1.4" height="1315" fill="#111"/>
<rect x="1" y="527" width="1" height="63" fill="#22dd22"/><rect x="2" y="532" width="1" height="1" fill="#22dd22"/><rect x="1" y="563" width="1" height="1" fill="#22dd22"/><rect x="3" y="611" width="1" height="2" fill="#1a8a1a"/><rect x="2" y="615" width="1" height="2" fill="#1a8a1a"/><rect x="2" y="619" width="1" height="2" fill="#1a8a1a"/><rect x="1" y="623" width="1" height="2" fill="#1a8a1a"/><rect x="0" y="627" width="1" height="2" fill="#1a8a1a"/><rect x="271" y="0" width="1" height="2" fill="#22dd22"/><rect x="276" y="0" width="1" height="2" fill="#22dd22"/><rect x="296" y="0" width="1" height="2" fill="#22dd22"/>
</svg>
</body></html>
